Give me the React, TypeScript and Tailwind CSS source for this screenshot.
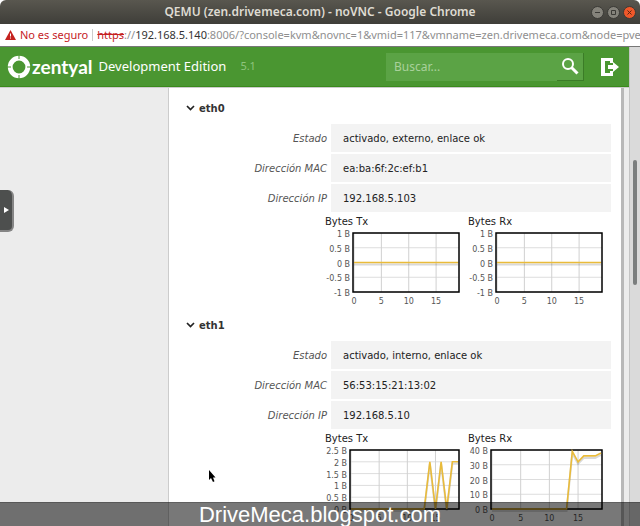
type Point = [number, number];

type Chart = {
  title: string;
  ticks: string[];
  max: number;
  min: number;
  left: number;
  points: Point[];
};

type NetworkInterface = {
  name: string;
  fields: { label: string; value: string }[];
  charts: Chart[];
};

const idle: Point[] = [
  [0, 0],
  [19, 0],
];

const interfaces: NetworkInterface[] = [
  {
    name: "eth0",
    fields: [
      { label: "Estado", value: "activado, externo, enlace ok" },
      { label: "Dirección MAC", value: "ea:ba:6f:2c:ef:b1" },
      { label: "Dirección IP", value: "192.168.5.103" },
    ],
    charts: [
      {
        title: "Bytes Tx",
        ticks: ["1 B", "0.5 B", "0 B", "-0.5 B", "-1 B"],
        max: 1,
        min: -1,
        left: 28,
        points: idle,
      },
      {
        title: "Bytes Rx",
        ticks: ["1 B", "0.5 B", "0 B", "-0.5 B", "-1 B"],
        max: 1,
        min: -1,
        left: 28,
        points: idle,
      },
    ],
  },
  {
    name: "eth1",
    fields: [
      { label: "Estado", value: "activado, interno, enlace ok" },
      { label: "Dirección MAC", value: "56:53:15:21:13:02" },
      { label: "Dirección IP", value: "192.168.5.10" },
    ],
    charts: [
      {
        title: "Bytes Tx",
        ticks: ["2.5 B", "2 B", "1.5 B", "1 B", "0.5 B", "0 B"],
        max: 2.5,
        min: 0,
        left: 25,
        points: [
          [0, 0],
          [13, 0],
          [14, 2],
          [15, 0],
          [16, 2],
          [17, 0],
          [18, 2],
          [19, 2],
        ],
      },
      {
        title: "Bytes Rx",
        ticks: ["40 B", "30 B", "20 B", "10 B", "0 B"],
        max: 40,
        min: 0,
        left: 23,
        points: [
          [0, 0],
          [13, 0],
          [14, 39],
          [15, 32],
          [16, 36],
          [18, 36],
          [19, 38],
        ],
      },
    ],
  },
];

const PLOT_TOP = 5;
const PLOT_HEIGHT = 59;
const PLOT_RIGHT = 134;

function ByteChart({ chart }: { chart: Chart }) {
  const width = PLOT_RIGHT - chart.left;
  const x = (value: number) => chart.left + 1 + (value / 19) * (width - 2);
  const y = (value: number) =>
    PLOT_TOP + ((chart.max - value) / (chart.max - chart.min)) * PLOT_HEIGHT;
  const line = chart.points.map(([px, py]) => `${x(px)},${y(py)}`).join(" ");
  const shadow = chart.points
    .map(([px, py]) => `${x(px)},${y(py) + 2}`)
    .join(" ");

  return (
    <figure className="w-[143px] shrink-0">
      <figcaption className="text-[10px] leading-3 text-[#222222]">
        {chart.title}
      </figcaption>
      <svg width="143" height="80" className="block" fill="none">
        {chart.ticks.map((tick, index) => {
          const ty = PLOT_TOP + (index / (chart.ticks.length - 1)) * PLOT_HEIGHT;
          return (
            <g key={tick}>
              <path d={`M${chart.left} ${ty}H${PLOT_RIGHT}`} stroke="#dddddd" />
              <text
                x={chart.left - 3}
                y={ty + 4}
                textAnchor="end"
                className="fill-[#555555] text-[8px]"
              >
                {tick}
              </text>
            </g>
          );
        })}
        {[0, 5, 10, 15].map((tick) => (
          <g key={tick}>
            <path
              d={`M${x(tick)} ${PLOT_TOP}v${PLOT_HEIGHT}`}
              stroke="#d0d0d0"
            />
            <text
              x={x(tick)}
              y="76"
              textAnchor="middle"
              className="fill-[#555555] text-[8px]"
            >
              {tick}
            </text>
          </g>
        ))}
        <rect
          x={chart.left}
          y={PLOT_TOP}
          width={width}
          height={PLOT_HEIGHT}
          stroke="#000000"
          strokeWidth="1.5"
        />
        <polyline
          points={shadow}
          stroke="#000000"
          strokeOpacity="0.15"
          strokeWidth="2"
        />
        <polyline points={line} stroke="#e9bb3a" strokeWidth="1.6" />
      </svg>
    </figure>
  );
}

function InterfacePanel({ item }: { item: NetworkInterface }) {
  return (
    <section>
      <button
        type="button"
        className="flex h-4 items-center gap-1 text-[10px] font-bold text-[#333333]"
      >
        <svg width="9" height="6" viewBox="0 0 9 6" fill="none">
          <path d="M1 1l3.5 3.5L8 1" stroke="#222222" strokeWidth="1.7" />
        </svg>
        {item.name}
      </button>
      <dl className="mt-2 flex flex-col gap-0.5">
        {item.fields.map((field) => (
          <div key={field.label} className="flex h-7 items-center gap-1">
            <dt className="w-[141px] shrink-0 text-right text-[10px] text-[#555555] italic">
              {field.label}
            </dt>
            <dd className="flex h-full flex-1 items-center bg-[#f3f3f3] px-3 text-[10px] text-[#222222]">
              {field.value}
            </dd>
          </div>
        ))}
      </dl>
      <div className="mt-1 ml-[139px] flex">
        {item.charts.map((chart) => (
          <ByteChart key={chart.title} chart={chart} />
        ))}
      </div>
    </section>
  );
}

function TitleBar() {
  return (
    <div className="relative flex h-6 shrink-0 items-center justify-center rounded-t-md bg-linear-to-b from-[#59574f] to-[#3f3e39]">
      <h1 className="font-['Noto_Sans'] text-[12px] font-semibold whitespace-nowrap text-[#dfdbd2]">
        QEMU (zen.drivemeca.com) - noVNC - Google Chrome
      </h1>
      <div className="absolute right-1 flex gap-[3px]">
        <button type="button" aria-label="Minimizar">
          <svg width="13" height="13" fill="none" stroke="#3b3a36">
            <circle cx="6.5" cy="6.5" r="6" fill="#85837b" />
            <path d="M4 6.5h5" />
          </svg>
        </button>
        <button type="button" aria-label="Maximizar">
          <svg width="13" height="13" fill="none" stroke="#3b3a36">
            <circle cx="6.5" cy="6.5" r="6" fill="#85837b" />
            <path d="M4.5 4.5h4v4h-4z" />
          </svg>
        </button>
        <button type="button" aria-label="Cerrar">
          <svg width="13" height="13" fill="none" stroke="#3b3a36">
            <circle cx="6.5" cy="6.5" r="6" fill="#f0582a" />
            <path d="M4.5 4.5l4 4m0-4l-4 4" stroke="#5c2412" />
          </svg>
        </button>
      </div>
    </div>
  );
}

function AddressBar() {
  return (
    <div className="flex h-[23px] shrink-0 items-center border-b border-[#777777] bg-white pl-[5px] font-['Noto_Sans'] text-[11px] whitespace-nowrap">
      <svg width="11" height="10" viewBox="0 0 11 10" className="shrink-0">
        <path d="M5.5 0L11 10H0z" fill="#c5221f" />
        <path d="M5 3.5h1v3H5zM5 7.5h1v1H5z" fill="#ffffff" />
      </svg>
      <span className="ml-1 text-[#c5221f]">No es seguro</span>
      <span className="mx-1 h-3 w-px shrink-0 bg-[#cccccc]" />
      <span className="text-[#8f8f8f]">
        <span className="text-[#c5221f] line-through">https</span>
        ://<span className="text-[#333333]">192.168.5.140</span>
        :8006/?console=kvm&amp;novnc=1&amp;vmid=117&amp;vmname=zen.drivemeca.com&amp;node=pve
      </span>
    </div>
  );
}

function Header() {
  return (
    <header className="flex h-10 shrink-0 items-center border-b border-[#3a8a1c] bg-[#4a9631] pr-[10px] pl-[7px] font-['Noto_Sans'] text-white">
      <svg width="24" height="24" viewBox="0 0 24 24" fill="none">
        <circle cx="12" cy="12" r="8.8" stroke="#ffffff" strokeWidth="4.8" />
        <path
          d="M12 0v4M12 20v4M0 12h4M20 12h4"
          stroke="#4a9631"
          strokeWidth="1"
        />
      </svg>
      <span className="ml-px font-['Lato'] text-[19px] leading-5 font-bold">
        zentyal
      </span>
      <span className="ml-[6px] text-[13px] whitespace-nowrap">
        Development Edition
      </span>
      <span className="ml-[14px] text-[11px] text-[#8fc47d]">5.1</span>
      <form className="ml-auto flex h-7 w-[198px] shrink-0 bg-[#5ba345]">
        <input
          type="text"
          aria-label="Buscar"
          placeholder="Buscar..."
          className="min-w-0 flex-1 px-2 text-[12px] outline-none placeholder:text-[#a9d19b]"
        />
        <button
          type="button"
          aria-label="Buscar"
          className="flex w-[27px] items-center justify-center border-r border-b border-[#3b7c27]"
        >
          <svg
            width="18"
            height="18"
            viewBox="0 0 18 18"
            fill="none"
            stroke="#ffffff"
          >
            <circle cx="7" cy="7" r="5" strokeWidth="2" />
            <path d="M10.5 10.5l6 6" strokeWidth="3" />
          </svg>
        </button>
      </form>
      <a href="#logout" aria-label="Salir" className="ml-[17px]">
        <svg width="18" height="18" viewBox="0 0 18 18" fill="#ffffff">
          <path d="M0 0h12v5H9V3H4v12h5v-2h3v5H0z" />
          <path d="M7 7h5V4l6 5-6 5v-3H7z" />
        </svg>
      </a>
    </header>
  );
}

export default function App() {
  return (
    <div className="relative flex h-screen flex-col overflow-hidden bg-white font-['DejaVu_Sans',sans-serif]">
      <TitleBar />
      <AddressBar />
      <div className="flex min-h-0 flex-1">
        <div className="flex min-w-0 flex-1 flex-col">
          <Header />
          <div className="flex min-h-0 flex-1 border-t border-[#cccccc]">
            <aside className="w-[169px] shrink-0 border-r border-[#cccccc] bg-[#ececec]" />
            <main className="min-w-0 flex-1 overflow-hidden pt-3 pr-[10px] pl-[17px]">
              <div className="flex flex-col gap-[9px]">
                {interfaces.map((item) => (
                  <InterfacePanel key={item.name} item={item} />
                ))}
              </div>
            </main>
            <div className="w-2 shrink-0 border-l-3 border-[#b8b8b8] bg-[#ececec]" />
          </div>
        </div>
        <div className="flex w-[11px] shrink-0 justify-center border-l border-[#c4c4c4] bg-[#dadada] pt-[113px]">
          <div className="h-[125px] w-1 rounded-full bg-[#7b7e7e]" />
        </div>
      </div>

      {/* noVNC control bar handle */}
      <button
        type="button"
        aria-label="Abrir panel"
        className="absolute top-[190px] left-0 flex h-[42px] w-[14px] items-center rounded-r-md border-r-2 border-b-2 border-[#858585] bg-[#4d4f4e] pl-1"
      >
        <svg width="5" height="6" viewBox="0 0 5 6">
          <path d="M0 0l5 3-5 3z" fill="#ffffff" />
        </svg>
      </button>

      <svg
        className="absolute top-[470px] left-[208px]"
        width="8"
        height="13"
        viewBox="0 0 8 13"
      >
        <path d="M1 0v10l2-2 2 4 1.5-.7L5 7.5h2.5z" fill="#000000" />
      </svg>

      <footer className="absolute inset-x-0 bottom-0 flex h-6 items-center justify-center border-t border-black/20 bg-black/53 font-['Liberation_Sans'] text-[22px] leading-6 text-white">
        DriveMeca.blogspot.com
      </footer>
    </div>
  );
}
